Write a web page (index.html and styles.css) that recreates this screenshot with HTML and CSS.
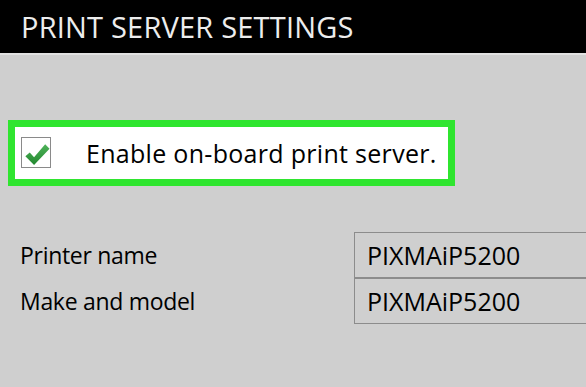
FILE: index.html
```html
<!DOCTYPE html>
<html lang="en">
<head>
  <meta charset="UTF-8" />
  <meta name="viewport" content="width=device-width, initial-scale=1.0"/>
  <title>Print Server Settings</title>
  <link rel="stylesheet" href="styles.css">
</head>
<body>
  <header class="title-bar">
    <h1>PRINT SERVER SETTINGS</h1>
  </header>

  <main class="settings">
    <label class="enable-box">
      <span class="check">
        <svg viewBox="0 0 28 30" width="28" height="30">
          <defs>
            <linearGradient id="tick" x1="0" y1="0" x2="0" y2="1">
              <stop offset="0" stop-color="#4fb35a"/>
              <stop offset="1" stop-color="#23882f"/>
            </linearGradient>
          </defs>
          <path d="M3 19 L7.5 15 L12 20 L23.5 6.5 L28 11 L12 28 Z" fill="url(#tick)"/>
        </svg>
      </span>
      <span class="enable-text">Enable on-board print server.</span>
    </label>

    <div class="fields">
      <div class="field-label">Printer name</div>
      <div class="field-value">PIXMAiP5200</div>
      <div class="field-label">Make and model</div>
      <div class="field-value">PIXMAiP5200</div>
    </div>
  </main>
</body>
</html>
```

FILE: styles.css
```css
body {
  margin: 0;
  font-family: "Open Sans", "Noto Sans", sans-serif;
  background: #cfcfcf;
  color: #000;
  height: 387px;
  overflow: hidden;
}
.title-bar {
  background: #000;
  height: 53px;
  border-bottom: 2px solid #e2e2e2;
  display: flex;
  align-items: center;
  padding-left: 21px;
}
.title-bar h1 {
  margin: 0;
  font-size: 29px;
  font-weight: 400;
  color: #ededed;
  letter-spacing: 0.2px;
}
.settings {
  padding: 65px 0 0 8px;
}
.enable-box {
  display: flex;
  align-items: center;
  width: 433px;
  height: 52px;
  border: 7px solid #2fe52f;
  background: #fff;
}
.check {
  width: 28px;
  height: 29px;
  margin-left: 6px;
  margin-top: -2px;
  border: 1px solid #8a8a8a;
  background: #fff;
  display: flex;
  overflow: hidden;
}
.check svg {
  width: 28px;
  height: 29px;
}
.enable-text {
  margin-left: 35px;
  font-size: 25px;
  letter-spacing: 0.3px;
}
.fields {
  margin-top: 46px;
  margin-left: 12px;
  display: grid;
  grid-template-columns: 334px 1fr;
}
.field-label {
  font-size: 23px;
  letter-spacing: -0.3px;
  display: flex;
  align-items: center;
  height: 45px;
}
.field-value {
  font-size: 25px;
  height: 44px;
  display: flex;
  align-items: center;
  padding-left: 12px;
  border: 1px solid #8c8c8c;
  border-right: none;
}
.field-value + .field-label + .field-value {
  border-top: 1px solid #8c8c8c;
}
```
